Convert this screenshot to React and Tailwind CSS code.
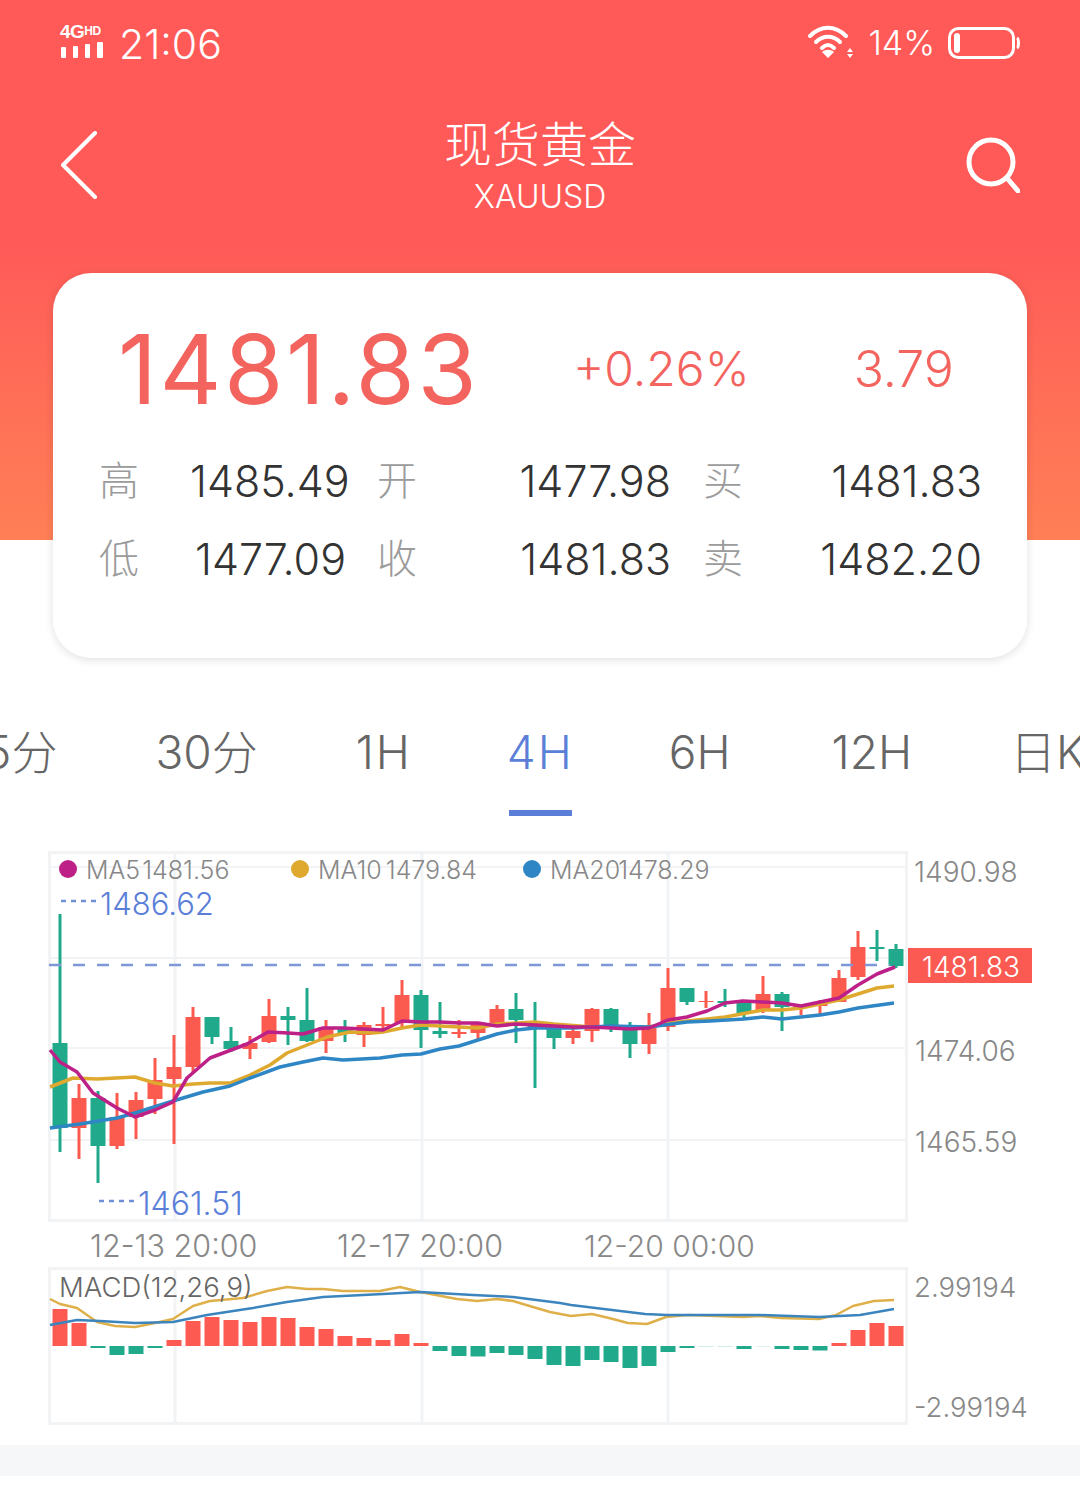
const R = "#fb5a4f";
const G = "#21a98b";
// [wickTop, wickBottom, bodyTop, bodyBottom, colour]
const candles = [
  [914,1152,1043,1128,G],[1084,1159,1098,1128,R],[1091,1183,1098,1146,G],[1093,1149,1117,1146,R],[1092,1139,1100,1117,R],
  [1058,1114,1080,1099,R],[1035,1144,1067,1079,R],[1007,1072,1017,1067,R],[1017,1044,1017,1037,G],[1027,1052,1041,1049,G],
  [1036,1059,1043,1049,R],[999,1043,1016,1042,R],[1007,1045,1016,1020,G],[988,1042,1020,1041,G],[1020,1053,1027,1041,R],
  [1020,1042,1027,1034,G],[1022,1047,1025,1035,R],[1007,1032,1024,1026,R],[980,1027,995,1023,R],[990,1048,995,1030,G],
  [1002,1038,1031,1034,G],[1020,1038,1032,1034,R],[1023,1040,1023,1033,R],[1005,1027,1009,1023,R],[993,1043,1009,1020,G],
  [1002,1088,1022,1029,G],[1029,1049,1029,1038,G],[1027,1044,1031,1038,R],[1008,1042,1009,1031,R],[1008,1032,1009,1027,G],
  [1022,1058,1030,1044,G],[1013,1054,1027,1044,R],[968,1031,988,1027,R],[988,1005,988,1002,G],[991,1008,1001,1002,R],
  [989,1007,1001,1003,G],[1002,1018,1002,1013,G],[976,1013,994,1011,R],[992,1031,994,1007,G],[1005,1015,1006,1008,R],
  [1000,1015,1002,1006,R],[970,1002,978,1002,R],[931,980,947,977,R],[930,961,947,949,G],[944,968,949,966,G],
];
const pts = (a) => a.map((p) => p.join(",")).join(" ");
const ma5 = [[50,1050],[60,1062],[77,1072],[93,1093],[117,1108],[135,1117],[155,1110],[173,1102],[187,1078],[210,1058],[247,1044],[268,1032],[288,1033],[303,1034],[323,1028],[343,1028],[363,1029],[383,1030],[402,1021],[421,1022],[440,1022],[459,1023],[478,1023],[497,1026],[516,1024],[535,1025],[554,1026],[573,1027],[592,1027],[611,1028],[630,1029],[649,1028],[668,1020],[687,1017],[707,1011],[725,1003],[743,1001],[763,1002],[782,1003],[801,1006],[820,1002],[839,998],[858,985],[877,974],[895,967]];
const ma10 = [[50,1087],[73,1078],[97,1079],[135,1077],[155,1083],[173,1086],[193,1084],[210,1083],[230,1083],[250,1075],[270,1065],[287,1053],[307,1045],[327,1037],[350,1032],[373,1033],[383,1032],[402,1028],[421,1025],[459,1027],[478,1028],[497,1024],[535,1022],[554,1024],[592,1027],[630,1027],[649,1027],[668,1023],[707,1019],[725,1017],[763,1010],[782,1010],[801,1008],[820,1004],[839,1000],[858,994],[877,988],[894,986]];
const ma20 = [[50,1128],[80,1124],[117,1118],[135,1113],[173,1101],[203,1092],[230,1086],[250,1078],[280,1067],[303,1062],[323,1058],[343,1060],[380,1058],[402,1055],[421,1054],[440,1049],[459,1046],[478,1040],[497,1034],[516,1030],[535,1028],[573,1028],[611,1026],[649,1027],[687,1022],[710,1021],[744,1019],[763,1017],[782,1019],[820,1015],[839,1012],[858,1008],[894,1003]];
const macdGold = [[50,1299],[60,1304],[77,1308],[97,1322],[115,1326],[135,1327],[155,1323],[173,1319],[193,1306],[210,1301],[243,1298],[267,1291],[287,1287],[307,1289],[323,1289],[343,1291],[380,1291],[400,1287],[420,1292],[457,1299],[477,1301],[497,1299],[513,1301],[533,1307],[550,1312],[571,1316],[592,1314],[609,1318],[628,1323],[647,1324],[666,1317],[688,1315],[743,1317],[760,1316],[781,1318],[819,1319],[836,1315],[853,1306],[874,1301],[894,1300]];
const macdBlue = [[50,1325],[77,1320],[100,1321],[135,1323],[173,1322],[207,1315],[253,1308],[287,1302],[323,1297],[383,1294],[420,1292],[473,1295],[513,1297],[560,1303],[571,1305],[612,1310],[645,1314],[667,1315],[743,1315],[760,1315],[819,1317],[860,1315],[894,1309]];
// bar height: positive rises above the zero line, negative falls below
const bars = [37,23,-2,-9,-8,-2,6,25,29,26,24,29,28,19,17,10,8,6,12,3,-5,-10,-10.5,-7,-9,-13,-19,-20,-14,-16,-22,-20,-6,-2,-0.6,-0.6,-3,-0.4,-3,-4,-4.5,3,16,23,20];
const ZERO = 1346;
const GRID = "#f2f3f5";

function Chart() {
  return (
    <svg className="absolute left-0 top-0" width="1080" height="625" viewBox="0 820 1080 625">
      <g stroke={GRID} strokeWidth="3" fill="none">
        <rect x="49.5" y="852.5" width="857" height="368" />
        <rect x="49.5" y="1268.5" width="857" height="155" />
        <path d="M175 852V1220M422 852V1220M668 852V1220M175 1268V1423M422 1268V1423M668 1268V1423" />
        <path d="M50 867H906M50 958H906M50 1048H906M50 1140H906" strokeWidth="2" />
      </g>
      {candles.map((c, i) => {
        const x = 60 + 19 * i;
        return (
          <g key={i} fill={c[4]}>
            <rect x={x - 1.5} y={c[0]} width="3" height={c[1] - c[0]} />
            <rect x={x - 7.5} y={c[2]} width="15" height={c[3] - c[2]} />
          </g>
        );
      })}
      <line x1="49" y1="965" x2="890" y2="965" stroke="#7d97d8" strokeWidth="2.5" strokeDasharray="12 12" />
      <polyline points={pts(ma10)} fill="none" stroke="#dfa92f" strokeWidth="3.5" strokeLinejoin="round" />
      <polyline points={pts(ma20)} fill="none" stroke="#2f86c5" strokeWidth="3.5" strokeLinejoin="round" />
      <polyline points={pts(ma5)} fill="none" stroke="#bd2188" strokeWidth="3.5" strokeLinejoin="round" />
      <path d="M61 901H99" stroke="#6f8fd6" strokeWidth="2.5" strokeDasharray="5 5" />
      <path d="M99 1201H137" stroke="#6f8fd6" strokeWidth="2.5" strokeDasharray="5 5" />
      <circle cx="68" cy="869" r="9" fill="#bd2188" />
      <circle cx="300" cy="869" r="9" fill="#dfa92f" />
      <circle cx="532" cy="869" r="9" fill="#2f86c5" />
      {bars.map((b, i) => {
        const x = 60 + 19 * i - 7.5;
        const h = Math.abs(b);
        return (
          <rect key={i} x={x} y={b > 0 ? ZERO - h : ZERO} width="15" height={h} fill={b > 0 ? "#fd5a52" : G} opacity={h < 1 ? 0.35 : 1} />
        );
      })}
      <polyline points={pts(macdGold)} fill="none" stroke="#dfb04a" strokeWidth="2.5" strokeLinejoin="round" />
      <polyline points={pts(macdBlue)} fill="none" stroke="#3b84bd" strokeWidth="2.5" strokeLinejoin="round" />
    </svg>
  );
}

function Label({ className, children }) {
  return <span className={"absolute whitespace-nowrap leading-none " + className}>{children}</span>;
}

function StatRow({ cells }) {
  return (
    <div className="flex h-[78px] items-center text-[43px] text-[#333333]">
      <span className="w-[92px] pl-[1px] text-[40px] text-[#9b9b9b]">{cells[0]}</span>
      <span className="w-[156px] text-right">{cells[1]}</span>
      <span className="ml-[31px] w-[40px] text-[40px] text-[#9b9b9b]">{cells[2]}</span>
      <span className="w-[254px] text-right">{cells[3]}</span>
      <span className="ml-[32px] w-[40px] text-[40px] text-[#9b9b9b]">{cells[4]}</span>
      <span className="w-[239px] text-right">{cells[5]}</span>
    </div>
  );
}

export default function App() {
  return (
    <div className="relative h-[1502px] w-[1080px] overflow-hidden bg-white font-['Inter','Noto_Sans_CJK_SC',sans-serif] font-light">
      <header className="h-[540px] bg-gradient-to-b from-[#ff5a58] from-45% to-[#ff7f56] text-white">
        <div className="flex h-[88px] items-center px-[60px]">
          <div className="mb-[9px] flex w-[44px] flex-col items-start">
            <span className="font-['Liberation_Sans'] font-bold leading-[18px] tracking-[-0.5px] text-[19px]">
              4G<span className="align-[3px] text-[12px]">HD</span>
            </span>
            <svg width="44" height="17" viewBox="0 0 44 17" fill="#fff">
              <rect x="1" y="6" width="5" height="11" rx="1" />
              <rect x="13" y="5" width="5" height="12" rx="1" />
              <rect x="25" y="3" width="5" height="14" rx="1" />
              <rect x="37" y="1" width="6" height="16" rx="1" />
            </svg>
          </div>
          <span className="ml-[15px] text-[41px] leading-none">21:06</span>
          <div className="mb-[3px] ml-auto flex items-center">
            <svg width="48" height="36" viewBox="0 0 46 36" fill="none" stroke="#fff" strokeWidth="4" strokeLinecap="round">
              <path d="M2 11C13 0 27 0 38 11" />
              <path d="M8 17C15 10 25 10 32 17" />
              <path d="M14 23C18 19 22 19 26 23" />
              <path d="M20 33L14 27C18 24 22 24 26 27Z" fill="#fff" stroke="none" />
              <path d="M42 23L45 27H39ZM42 33L39 29H45Z" fill="#fff" stroke="none" />
            </svg>
            <span className="ml-[13px] text-[34px] leading-none">14%</span>
            <svg className="ml-[13px]" width="72" height="32" viewBox="0 0 72 32" fill="none">
              <rect x="1.5" y="1.5" width="64" height="29" rx="9" stroke="#fff" strokeWidth="3" />
              <rect x="6" y="6" width="6" height="20" rx="3" fill="#fff" />
              <path d="M69 11C71 12 71 20 69 21" stroke="#fff" strokeWidth="3" />
            </svg>
          </div>
        </div>
        <div className="mt-[12px] flex h-[130px] items-center justify-between px-[60px]">
          <div className="w-[54px]">
            <svg width="38" height="68" viewBox="0 0 38 68" fill="none" stroke="#fff" strokeWidth="4" strokeLinecap="round" strokeLinejoin="round">
              <path d="M35 2L3 34L35 66" />
            </svg>
          </div>
          <div className="flex flex-col items-center">
            <span className="mt-[3px] text-[48px] leading-[56px]">现货黄金</span>
            <span className="mt-[4px] text-[32px] leading-[40px]">XAUUSD</span>
          </div>
          <svg width="54" height="56" viewBox="0 0 54 56" fill="none" stroke="#fff" strokeWidth="5" strokeLinecap="round">
            <circle cx="25" cy="25" r="22" />
            <path d="M41 41L52 54" />
          </svg>
        </div>
      </header>

      <section className="relative z-10 mx-[53px] -mt-[267px] h-[385px] rounded-[38px] bg-white px-[45px] pt-[47px] shadow-[0_2px_10px_rgba(0,0,0,0.12)]">
        <div className="flex h-[100px] items-center pb-[2px] text-[#f4645f]">
          <span className="ml-[20px] w-[455px] text-[96px] font-normal leading-none tracking-[2.5px]">1481.83</span>
          <span className="text-[48px] leading-none">+0.26%</span>
          <span className="ml-[104px] text-[50px] leading-none">3.79</span>
        </div>
        <div className="mt-[22px]">
          <StatRow cells={["高", "1485.49", "开", "1477.98", "买", "1481.83"]} />
          <StatRow cells={["低", "1477.09", "收", "1481.83", "卖", "1482.20"]} />
        </div>
      </section>

      <nav className="mt-[62px] flex h-[95px] items-start whitespace-nowrap text-[46px] leading-[64px] text-[#666666]">
        <span className="-ml-[34px]">15分</span>
        <span className="ml-[98px]">30分</span>
        <span className="ml-[98px] tracking-[2px]">1H</span>
        <span className="ml-[95px] flex flex-col items-center tracking-[2px] text-[#5b7fd8]">
          4H
          <span className="mt-[26px] block h-[6px] w-[63px] bg-[#5b7fd8]" />
        </span>
        <span className="ml-[95px]">6H</span>
        <span className="ml-[101px]">12H</span>
        <span className="ml-[98px]">日K</span>
      </nav>

      <section className="relative mt-[5px] h-[625px] text-[#888888]">
        <Chart />
        <Label className="left-[86px] top-[38px] text-[25px] [word-spacing:-5px]">MA5 1481.56</Label>
        <Label className="left-[318px] top-[38px] text-[25px] [word-spacing:-3px]">MA10 1479.84</Label>
        <Label className="left-[550px] top-[38px] text-[25px] [word-spacing:-9px]">MA20 1478.29</Label>
        <Label className="left-[100px] top-[68px] text-[31px] text-[#5b7fd8]">1486.62</Label>
        <Label className="left-[138px] top-[368px] text-[32px] text-[#5b7fd8]">1461.51</Label>
        <Label className="left-[914px] top-[38px] text-[28px]">1490.98</Label>
        <Label className="left-[915px] top-[217px] text-[28px]">1474.06</Label>
        <Label className="left-[915px] top-[308px] text-[28px]">1465.59</Label>
        <Label className="left-[908px] top-[128px] flex h-[35px] w-[124px] items-center justify-center bg-[#fb5a52] pl-[2px] pt-[2px] text-[28px] text-white">1481.83</Label>
        <Label className="left-[90px] top-[411px] text-[30.5px]">12-13 20:00</Label>
        <Label className="left-[337px] top-[411px] text-[30.5px]">12-17 20:00</Label>
        <Label className="left-[584px] top-[411px] text-[30px]">12-20 00:00</Label>
        <Label className="left-[59px] top-[454px] text-[27.5px] text-[#666666]">MACD(12,26,9)</Label>
        <Label className="left-[914px] top-[454px] text-[27.5px]">2.99194</Label>
        <Label className="left-[914px] top-[574px] text-[27.5px]">-2.99194</Label>
      </section>

      <div className="h-[31px] bg-[#f6f7f9]" />
    </div>
  );
}
